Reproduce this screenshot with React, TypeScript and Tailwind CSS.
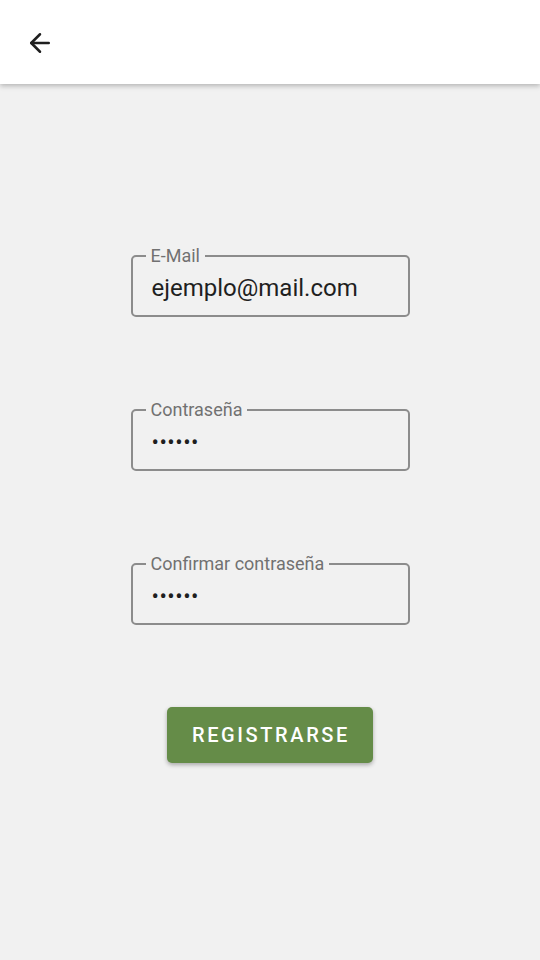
import { ArrowLeft } from "lucide-react";

const Field = ({ label, value, password }: { label: string; value: string; password?: boolean }) => {
  return (
    <div className="relative h-[62px] w-[279px] rounded-[5px] border-2 border-[#8c8c8c]">
      <span className="absolute -top-[12px] left-[13px] bg-[#f1f1f1] px-[5px] text-[18px] leading-[22px] text-[#717171]">
        {label}
      </span>
      <div
        className={
          password
            ? "flex h-full items-center pl-[19px] pt-[5px] text-[22px] tracking-[0.5px] text-[#1f1f1f]"
            : "flex h-full items-center pl-[19px] pt-[3px] text-[24px] text-[#1f1f1f]"
        }
      >
        {value}
      </div>
    </div>
  );
};

export default function App() {
  return (
    <div className="min-h-[960px] bg-[#f1f1f1] font-['Roboto',sans-serif]">
      {/* Top bar */}
      <header className="relative z-10 flex h-[84px] items-center bg-white px-[25px] pt-[2px] shadow-[0_2px_5px_rgba(0,0,0,0.25)]">
        <ArrowLeft size={30} strokeWidth={2} className="text-[#1f1f1f]" />
      </header>

      {/* Form */}
      <main className="flex flex-col items-center pt-[171px]">
        <div className="flex flex-col gap-[92px]">
          <Field label="E-Mail" value="ejemplo@mail.com" />
          <Field label="Contraseña" value="••••••" password />
          <Field label="Confirmar contraseña" value="••••••" password />
        </div>

        <button
          type="button"
          className="mt-[82px] h-[56px] w-[206px] rounded-[5px] bg-[#658c48] pl-[2px] text-[20px] font-medium tracking-[2.6px] text-white shadow-[0_2px_4px_rgba(0,0,0,0.3)]"
        >
          REGISTRARSE
        </button>
      </main>
    </div>
  );
}
